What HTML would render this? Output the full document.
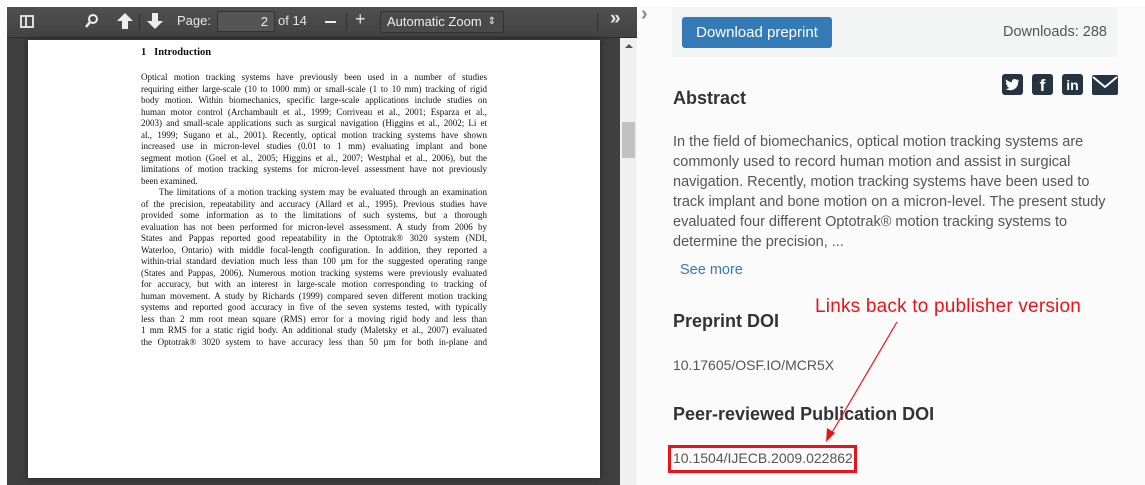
<!DOCTYPE html>
<html><head><meta charset="utf-8"><style>
*{margin:0;padding:0;box-sizing:border-box}
body{width:1145px;height:485px;overflow:hidden;background:#fbfbfb;position:relative;font-family:"Liberation Sans",sans-serif}
.abs{position:absolute}
#viewer{left:7px;top:7px;width:630px;height:478px;background:#3f3f3f}
#tb{left:7px;top:7px;width:630px;height:31px;background:linear-gradient(#505050,#434343);border-bottom:1px solid #2e2e2e}
.ti{color:#e6e6e6;font-size:13px;position:absolute}
#page{left:28px;top:40px;width:572px;height:438px;background:#fff;box-shadow:0 0 6px #222}
#pdf{left:141px;top:72px;width:346px;font-family:"Liberation Serif",serif;font-size:9px;line-height:11.5px;color:#111}
#pdf div{text-align:justify;text-align-last:justify;white-space:nowrap;height:11.5px}
#pdf div.l{text-align-last:left}
.r{color:#333;font-family:"Liberation Sans",sans-serif}
h2{position:absolute;font-size:18px;font-weight:bold;color:#333}
#track{left:620px;top:38px;width:17px;height:447px;background:#f0f0f0}
.ic{position:absolute;top:74px;width:21px;height:21px;background:#263340;border-radius:3px;color:#fff;font-weight:bold;text-align:center}
</style></head><body>
<div class="abs" style="left:0;top:0;width:1145px;height:7px;background:#fff"></div>
<div id="viewer" class="abs"></div>
<div id="tb" class="abs"></div>
<div class="abs" style="left:20px;top:15px;width:14px;height:13px;border:2px solid #ddd"></div>
<div class="abs" style="left:25px;top:15px;width:2px;height:13px;background:#ddd"></div>
<svg class="abs" style="left:84px;top:13px" width="16" height="16"><circle cx="9" cy="6" r="4" stroke="#eee" stroke-width="2" fill="none"/><line x1="6" y1="9" x2="2" y2="14" stroke="#eee" stroke-width="2.5"/></svg>
<svg class="abs" style="left:116px;top:12px" width="18" height="18"><path d="M9 1 L17 9 H12 V17 H6 V9 H1 Z" fill="#eee"/></svg>
<div class="abs" style="left:139px;top:13px;width:1px;height:18px;background:#333"></div>
<svg class="abs" style="left:146px;top:12px" width="18" height="18"><path d="M9 17 L17 9 H12 V1 H6 V9 H1 Z" fill="#eee"/></svg>
<div class="ti" style="left:177px;top:13px">Page:</div>
<div class="abs" style="left:217px;top:11px;width:58px;height:21px;background:#555;border:1px solid #333;border-radius:2px;color:#eee;font-size:13px;text-align:right;padding-right:6px;line-height:19px">2</div>
<div class="ti" style="left:278px;top:13px">of 14</div>
<div class="abs" style="left:325px;top:21px;width:11px;height:2px;background:#eee"></div>
<div class="abs" style="left:346px;top:13px;width:1px;height:18px;background:#333"></div>
<div class="ti" style="left:355px;top:9px;font-size:18px">+</div>
<div class="abs" style="left:380px;top:11px;width:124px;height:22px;background:#4a4a4a;border:1px solid #333;border-radius:2px;color:#eee;font-size:13px;line-height:20px;padding-left:6px">Automatic Zoom<span style="position:absolute;right:7px;font-size:10px">⇕</span></div>
<div class="abs" style="left:597px;top:13px;width:1px;height:18px;background:#333"></div>
<div class="ti" style="left:610px;top:8px;font-size:19px;font-weight:bold">»</div>
<div class="abs" style="left:641px;top:3px;color:#888;font-size:20px;font-weight:bold">›</div>
<div id="page" class="abs"></div>
<div class="abs" style="left:141px;top:47px;font-family:'Liberation Serif',serif;font-size:10.5px;font-weight:bold;color:#111">1&nbsp;&nbsp;&nbsp;Introduction</div>
<div id="pdf" class="abs">
<div>Optical motion tracking systems have previously been used in a number of studies</div>
<div>requiring either large-scale (10 to 1000 mm) or small-scale (1 to 10 mm) tracking of rigid</div>
<div>body motion. Within biomechanics, specific large-scale applications include studies on</div>
<div>human motor control (Archambault et al., 1999; Corriveau et al., 2001; Esparza et al.,</div>
<div>2003) and small-scale applications such as surgical navigation (Higgins et al., 2002; Li et</div>
<div>al., 1999; Sugano et al., 2001). Recently, optical motion tracking systems have shown</div>
<div>increased use in micron-level studies (0.01 to 1 mm) evaluating implant and bone</div>
<div>segment motion (Goel et al., 2005; Higgins et al., 2007; Westphal et al., 2006), but the</div>
<div>limitations of motion tracking systems for micron-level assessment have not previously</div>
<div class="l">been examined.</div>
<div style="padding-left:18px">The limitations of a motion tracking system may be evaluated through an examination</div>
<div>of the precision, repeatability and accuracy (Allard et al., 1995). Previous studies have</div>
<div>provided some information as to the limitations of such systems, but a thorough</div>
<div>evaluation has not been performed for micron-level assessment. A study from 2006 by</div>
<div>States and Pappas reported good repeatability in the Optotrak® 3020 system (NDI,</div>
<div>Waterloo, Ontario) with middle focal-length configuration. In addition, they reported a</div>
<div>within-trial standard deviation much less than 100 µm for the suggested operating range</div>
<div>(States and Pappas, 2006). Numerous motion tracking systems were previously evaluated</div>
<div>for accuracy, but with an interest in large-scale motion corresponding to tracking of</div>
<div>human movement. A study by Richards (1999) compared seven different motion tracking</div>
<div>systems and reported good accuracy in five of the seven systems tested, with typically</div>
<div>less than 2 mm root mean square (RMS) error for a moving rigid body and less than</div>
<div>1 mm RMS for a static rigid body. An additional study (Maletsky et al., 2007) evaluated</div>
<div>the Optotrak® 3020 system to have accuracy less than 50 µm for both in-plane and</div>
</div>
<div id="track" class="abs"></div>
<div class="abs" style="left:625px;top:44px;width:0;height:0;border-left:4px solid transparent;border-right:4px solid transparent;border-bottom:4px solid #555"></div>
<div class="abs" style="left:622px;top:122px;width:13px;height:36px;background:#c1c1c1"></div>
<div class="abs" style="left:672px;top:7px;width:445px;height:50px;background:#f3f4f4"></div>
<div class="abs" style="left:682px;top:17px;width:150px;height:31px;background:#337ab7;border-radius:3px;color:#fff;font-size:15px;line-height:32px;text-align:center">Download preprint</div>
<div class="abs r" style="right:38px;top:24px;font-size:14.5px;color:#555">Downloads: 288</div>
<svg class="abs" style="left:1002px;top:74px" width="21" height="21"><rect width="21" height="21" rx="3" fill="#263340"/><path d="M17 6 C16 6.5 15.5 6.6 15 6.7 C15.6 6.3 16 5.8 16.2 5.2 C15.6 5.5 15 5.8 14.4 5.9 C13.2 4.6 11 4.8 10.2 6.4 C9.9 7 9.9 7.7 10 8.3 C7.7 8.2 5.6 7.1 4.2 5.4 C3.5 6.7 3.9 8.3 5.1 9.1 C4.6 9.1 4.2 9 3.8 8.8 C3.8 10.2 4.8 11.4 6.1 11.6 C5.7 11.8 5.2 11.8 4.8 11.7 C5.2 12.9 6.3 13.6 7.5 13.7 C6.3 14.6 4.8 15.1 3.3 14.9 C9.5 18.5 16.5 14.5 16.2 7.6 C16.6 7.1 17 6.6 17 6 Z" fill="#fff"/></svg>
<div class="ic" style="left:1032px;font-size:17px;line-height:24px">f</div>
<div class="ic" style="left:1062px;font-size:14px;line-height:22px">in</div>
<svg class="abs" style="left:1092px;top:75px" width="26" height="20"><rect width="26" height="20" rx="2" fill="#263340"/><path d="M1 2 L13 12 L25 2" stroke="#fbfbfb" stroke-width="2" fill="none"/></svg>
<h2 style="left:673px;top:88px">Abstract</h2>
<div class="abs r" style="left:673px;top:132px;width:450px;font-size:14.5px;line-height:20px;color:#555">In the field of biomechanics, optical motion tracking systems are commonly used to record human motion and assist in surgical navigation. Recently, motion tracking systems have been used to track implant and bone motion on a micron-level. The present study evaluated four different Optotrak® motion tracking systems to determine the precision, ...</div>
<div class="abs" style="left:680px;top:262px;font-size:14.5px;color:#337ab7">See more</div>
<div class="abs" style="left:815px;top:296px;font-size:19px;color:#e8141a;letter-spacing:0.2px">Links back to publisher version</div>
<h2 style="left:673px;top:311px">Preprint DOI</h2>
<div class="abs r" style="left:673px;top:357px;font-size:14px;color:#555">10.17605/OSF.IO/MCR5X</div>
<h2 style="left:673px;top:404px">Peer-reviewed Publication DOI</h2>
<div class="abs" style="left:668px;top:445px;width:189px;height:28px;border:3px solid #e8141a"></div>
<div class="abs r" style="left:673px;top:450px;font-size:14px;color:#555">10.1504/IJECB.2009.022862</div>
<svg class="abs" style="left:0;top:0" width="1145" height="485"><line x1="897" y1="322" x2="830" y2="436" stroke="#e8141a" stroke-width="1.2"/><path d="M826 442 L827 428 L835 433 Z" fill="#e8141a"/></svg>
</body></html>
